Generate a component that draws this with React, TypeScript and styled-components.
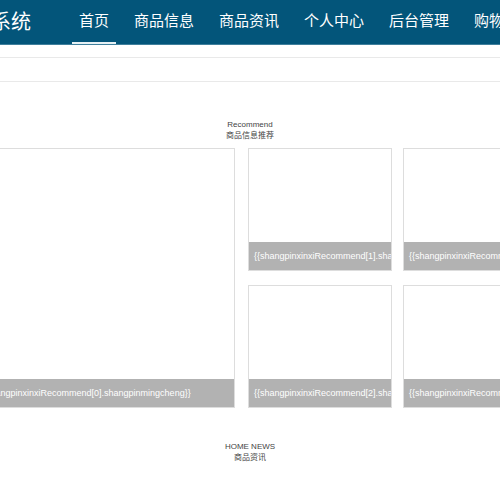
import React from "react";
import styled, { createGlobalStyle } from "styled-components";

const GlobalStyle = createGlobalStyle`
  html, body {
    margin: 0;
    padding: 0;
    background: #ffffff;
    overflow: hidden;
  }
  body {
    font-family: "Liberation Sans", "Noto Sans CJK SC", Arial, sans-serif;
  }
`;

interface NavItemProps {
  active?: boolean;
}

const menus = ["首页", "商品信息", "商品资讯", "个人中心", "后台管理", "购物车"];

const App: React.FC = () => {
  const recommend = [0, 1, 2, 3, 4];

  return (
    <Page>
      <GlobalStyle />
      <StyledNav>
        <StyledLogo>商品管理系统</StyledLogo>
        <StyledMenu>
          {menus.map((menu, index) => (
            <StyledNavItem key={menu} active={index === 0}>
              {menu}
            </StyledNavItem>
          ))}
        </StyledMenu>
      </StyledNav>
      <StyledNoticeBar />
      <StyledRecommendSection>
        <StyledSectionTitle>
          <div>Recommend</div>
          <div>商品信息推荐</div>
        </StyledSectionTitle>
        <StyledRecommendRow>
          <StyledBigCard>
            <StyledCaption>
              {"{{shangpinxinxiRecommend[0].shangpinmingcheng}}"}
            </StyledCaption>
          </StyledBigCard>
          <StyledSmallGrid>
            {recommend.slice(1).map((i) => (
              <StyledSmallCard key={i}>
                <StyledCaption>
                  {`{{shangpinxinxiRecommend[${i}].shangpinmingcheng}}`}
                </StyledCaption>
              </StyledSmallCard>
            ))}
          </StyledSmallGrid>
        </StyledRecommendRow>
      </StyledRecommendSection>
      <StyledNewsSection>
        <StyledSectionTitle>
          <div>HOME NEWS</div>
          <div>商品资讯</div>
        </StyledSectionTitle>
      </StyledNewsSection>
    </Page>
  );
};

const Page = styled.div`
  width: 500px;
  height: 500px;
  overflow: hidden;
`;

const StyledNav = styled.div`
  display: flex;
  align-items: stretch;
  height: 45px;
  box-sizing: border-box;
  background-color: #03557a;
  border-bottom: 1px solid #3f7f9c;
  white-space: nowrap;
`;

const StyledLogo = styled.div`
  flex-shrink: 0;
  margin-left: -89px;
  margin-right: 41px;
  font-size: 20px;
  line-height: 44px;
  color: #ffffff;
`;

const StyledMenu = styled.div`
  display: flex;
  gap: 11px;
  flex-shrink: 0;
`;

const StyledNavItem = styled.div<NavItemProps>`
  padding: 0 7px;
  font-size: 15px;
  line-height: 42px;
  color: #ffffff;
  border-bottom: 2px solid
    ${({ active }) => (active ? "#e6f1f5" : "transparent")};
`;

const StyledNoticeBar = styled.div`
  margin-top: 12px;
  height: 23px;
  border-top: 1px solid #e9e9e9;
  border-bottom: 1px solid #e9e9e9;
`;

const StyledRecommendSection = styled.div`
  display: flex;
  flex-direction: column;
  gap: 7px;
  padding-top: 37px;
  height: 326px;
  box-sizing: border-box;
`;

const StyledSectionTitle = styled.div`
  text-align: center;
  font-size: 8px;
  line-height: 11px;
  color: #444444;
`;

const StyledRecommendRow = styled.div`
  display: flex;
  gap: 13px;
  height: 260px;
  margin-left: -26px;
`;

const StyledCard = styled.div`
  display: flex;
  flex-direction: column;
  justify-content: flex-end;
  flex-shrink: 0;
  box-sizing: border-box;
  border: 1px solid #dddddd;
  background-color: #ffffff;
  overflow: hidden;
`;

const StyledBigCard = styled(StyledCard)`
  width: 261px;
  height: 260px;
`;

const StyledSmallGrid = styled.div`
  display: grid;
  grid-template-rows: 123px 123px;
  grid-auto-flow: column;
  grid-auto-columns: 144px;
  column-gap: 11px;
  row-gap: 14px;
  flex-shrink: 0;
`;

const StyledSmallCard = styled(StyledCard)`
  width: 144px;
  height: 123px;
`;

const StyledCaption = styled.div`
  height: 28px;
  padding: 0 5px;
  background-color: #b2b2b2;
  color: #ffffff;
  font-size: 9px;
  line-height: 28px;
  white-space: nowrap;
  overflow: hidden;
`;

const StyledNewsSection = styled.div`
  padding-top: 33px;
`;

export default App;
